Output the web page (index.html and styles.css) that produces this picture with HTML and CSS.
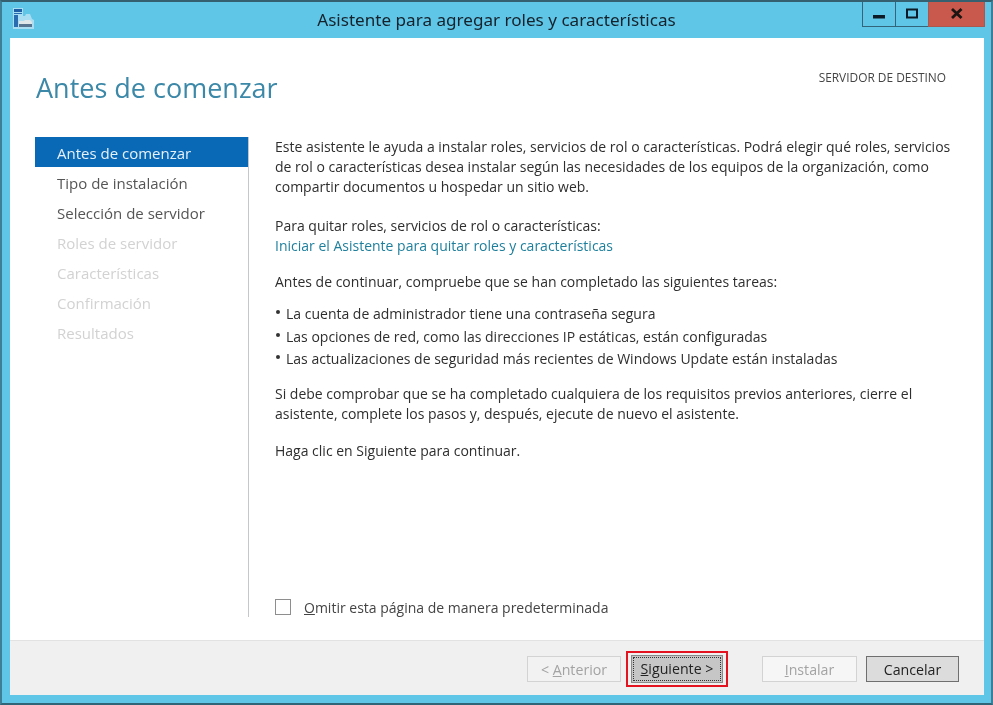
FILE: index.html
```html
<!DOCTYPE html>
<html lang="es">
<head>
    <meta charset="UTF-8">
    <meta name="viewport" content="width=device-width, initial-scale=1.0">
    <title>Asistente para agregar roles y características</title>
    <link rel="stylesheet" href="styles.css">
</head>
<body>
    <div class="window">
        <div class="titlebar">
            <svg class="app-icon" width="22" height="22" viewBox="0 0 22 22">
                <path d="M1 0h10v8h2l1-2h4l2 5 2 1v9H1z" fill="#a9def2"/>
                <rect x="2" y="1" width="8" height="3" fill="#1f5fa8"/>
                <rect x="2" y="5" width="8" height="1" fill="#2a6cb0"/>
                <rect x="2" y="7" width="4" height="12" fill="#2a6cb0"/>
                <path d="M7 13h5l1-1h5l2 2v2H7z" fill="#dfe6ea"/>
                <rect x="7" y="16" width="13" height="3" fill="#56748f"/>
            </svg>
            <div class="title">Asistente para agregar roles y características</div>
            <div class="controls">
                <div class="control">
                    <svg width="14" height="14" viewBox="0 0 14 14"><rect x="1" y="8" width="12" height="3.5" fill="#0d1b26"/></svg>
                </div>
                <div class="control">
                    <svg width="14" height="14" viewBox="0 0 14 14"><path d="M2 2.5h10v8h-10z" fill="none" stroke="#0d1b26" stroke-width="2"/></svg>
                </div>
                <div class="control control-close">
                    <svg width="14" height="14" viewBox="0 0 14 14"><path d="M2 2l9.5 9M11.5 2l-9.5 9" fill="none" stroke="#1c1512" stroke-width="2.8"/></svg>
                </div>
            </div>
        </div>

        <div class="client">
            <div class="page-header">
                <h1 class="page-title">Antes de comenzar</h1>
                <div class="target">SERVIDOR DE DESTINO</div>
            </div>

            <div class="main">
                <div class="steps">
                    <div class="step active">Antes de comenzar</div>
                    <div class="step">Tipo de instalación</div>
                    <div class="step">Selección de servidor</div>
                    <div class="step disabled">Roles de servidor</div>
                    <div class="step disabled">Características</div>
                    <div class="step disabled">Confirmación</div>
                    <div class="step disabled">Resultados</div>
                </div>

                <div class="content">
                    <div class="text">
                        <p class="intro">Este asistente le ayuda a instalar roles, servicios de rol o características. Podrá elegir qué roles, servicios<br>de rol o características desea instalar según las necesidades de los equipos de la organización, como<br>compartir documentos u hospedar un sitio web.</p>
                        <p class="remove">Para quitar roles, servicios de rol o características:<br><a class="link" href="#">Iniciar el Asistente para quitar roles y características</a></p>
                        <p class="before">Antes de continuar, compruebe que se han completado las siguientes tareas:</p>
                        <ul class="tasks">
                            <li>La cuenta de administrador tiene una contraseña segura</li>
                            <li>Las opciones de red, como las direcciones IP estáticas, están configuradas</li>
                            <li>Las actualizaciones de seguridad más recientes de Windows Update están instaladas</li>
                        </ul>
                        <p class="check">Si debe comprobar que se ha completado cualquiera de los requisitos previos anteriores, cierre el<br>asistente, complete los pasos y, después, ejecute de nuevo el asistente.</p>
                        <p class="next">Haga clic en Siguiente para continuar.</p>
                    </div>
                    <label class="skip">
                        <span class="checkbox"></span>
                        <span><u>O</u>mitir esta página de manera predeterminada</span>
                    </label>
                </div>
            </div>

            <div class="footer">
                <button class="btn" disabled>&lt; <u>A</u>nterior</button>
                <div class="btn-highlight">
                    <button class="btn btn-default"><span class="focus"><u>S</u>iguiente &gt;</span></button>
                </div>
                <button class="btn btn-install" disabled><u>I</u>nstalar</button>
                <button class="btn btn-cancel">Cancelar</button>
            </div>
        </div>
    </div>
</body>
</html>
```

FILE: styles.css
```css
html, body {
    margin: 0;
    padding: 0;
}

body {
    width: 993px;
    height: 705px;
    overflow: hidden;
    font-family: "Open Sans", "Noto Sans", sans-serif;
    font-size: 14px;
    color: #2e2e2e;
}

.window {
    box-sizing: border-box;
    width: 993px;
    height: 705px;
    display: flex;
    flex-direction: column;
    background: #5fc6e8;
    border: 2px solid #3f7f96;
    border-top-color: #35606f;
    border-bottom-color: #2f6577;
    filter: blur(0.45px);
}

/* barre de titre */
.titlebar {
    height: 36px;
    flex-shrink: 0;
    display: flex;
    align-items: flex-start;
    position: relative;
}

.app-icon {
    margin: 6px 0 0 10px;
}

.title {
    position: absolute;
    left: 0;
    right: 0;
    top: 6px;
    text-align: center;
    font-family: "Noto Sans", sans-serif;
    font-size: 17.1px;
    line-height: 24px;
    color: #15222b;
}

.controls {
    margin-left: auto;
    margin-right: 6px;
    display: flex;
    position: relative;
    z-index: 1;
}

.control {
    box-sizing: border-box;
    width: 34px;
    height: 25px;
    display: flex;
    align-items: center;
    justify-content: center;
    border: 1px solid #33657a;
    border-top: none;
    margin-left: -1px;
}

.control-close {
    width: 57px;
    background: #c9584d;
    border-color: #a9574f;
}

/* zone cliente */
.client {
    flex: 1;
    margin: 0 7px 8px 8px;
    display: flex;
    flex-direction: column;
    background: #fff;
    min-height: 0;
}

.page-header {
    height: 99px;
    flex-shrink: 0;
    display: flex;
    justify-content: space-between;
    align-items: flex-start;
    padding: 0 38px 0 26px;
}

.page-title {
    margin: 30px 0 0;
    font-size: 27px;
    line-height: 40px;
    font-weight: 400;
    color: #3b88a8;
}

.target {
    margin-top: 31px;
    font-size: 11.9px;
    line-height: 16px;
    color: #444;
}

.main {
    flex: 1;
    display: flex;
    min-height: 0;
    padding: 0 0 23px 25px;
}

.steps {
    width: 213px;
    flex-shrink: 0;
    border-right: 1px solid #c4c8ca;
    font-size: 15px;
}

.step {
    box-sizing: border-box;
    height: 30px;
    line-height: 30px;
    padding: 1px 0 0 22px;
    color: #555;
}

.step.active {
    background: #0a69b7;
    color: #e6f1f8;
}

.step.disabled {
    color: #d2d2d2;
}

.content {
    flex: 1;
    display: flex;
    flex-direction: column;
    justify-content: space-between;
    padding: 0 24px 0 26px;
}

.text p {
    margin: 0;
    line-height: 20px;
}

.text .remove {
    margin-top: 19px;
}

.link {
    color: #1e7f9c;
    text-decoration: none;
}

.text .before {
    margin-top: 16px;
}

.tasks {
    margin: 11px 0 0;
    padding: 0;
    list-style: none;
}

.tasks li {
    height: 22.5px;
    line-height: 22.5px;
    padding-left: 11px;
    position: relative;
}

.tasks li::before {
    content: "";
    position: absolute;
    left: 1px;
    top: 7px;
    width: 4px;
    height: 4px;
    border-radius: 50%;
    background: #333;
}

.text .check {
    margin-top: 13px;
}

.text .next {
    margin-top: 17px;
}

.skip {
    display: flex;
    align-items: center;
    gap: 13px;
    height: 20px;
    color: #444;
}

.checkbox {
    box-sizing: border-box;
    width: 16px;
    height: 16px;
    border: 1px solid #8e8e8e;
    background: #fff;
}

/* boutons */
.footer {
    height: 55px;
    flex-shrink: 0;
    box-sizing: border-box;
    display: flex;
    align-items: center;
    padding: 2px 25px 0 517px;
    background: #f0f0f0;
    border-top: 1px solid #e2e2e2;
}

.btn {
    box-sizing: border-box;
    width: 94px;
    height: 26px;
    padding: 0;
    font-family: inherit;
    font-size: 14.2px;
    background: #f2f2f2;
    border: 1px solid #d3d3d3;
    color: #a3a3a3;
}

.btn-highlight {
    margin-left: 5px;
    padding: 2px 3px;
    border: 2px solid #e3141f;
    display: flex;
}

.btn-default {
    width: 92px;
    height: 28px;
    padding: 1px;
    background: #c6c6c6;
    border-color: #8a8a8a;
    color: #222;
}

.focus {
    box-sizing: border-box;
    display: block;
    height: 100%;
    line-height: 22px;
    border: 1px dotted #333;
}

.btn-install {
    margin-left: 34px;
    width: 95px;
    background: #f6f6f6;
}

.btn-cancel {
    margin-left: 9px;
    width: 93px;
    background: #dcdcdc;
    border-color: #6f6f6f;
    color: #222;
}
```
